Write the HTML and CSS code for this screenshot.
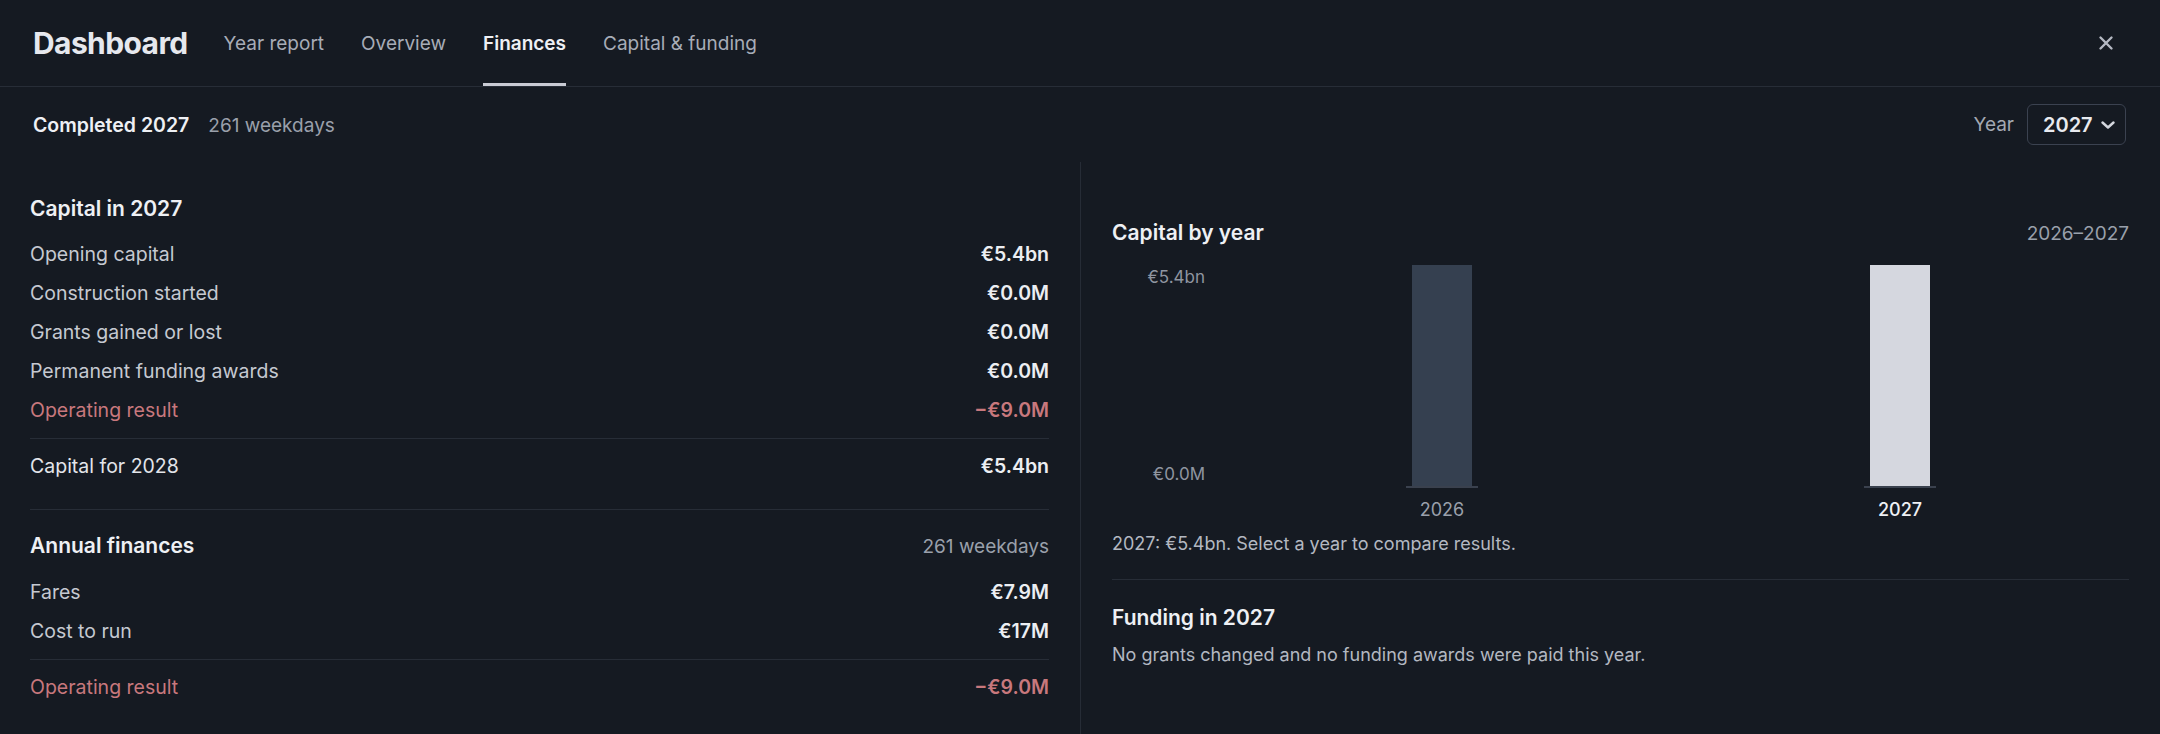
FILE: index.html
```html
<!DOCTYPE html>
<html>
<head>
    <title>Dashboard - Finances</title>
    <link rel="stylesheet" href="styles.css">
</head>
<body>
    <div class="header">
        <h1 class="title">Dashboard</h1>
        <nav class="tabs">
            <a class="tab">Year report</a>
            <a class="tab">Overview</a>
            <a class="tab active">Finances</a>
            <a class="tab">Capital &amp; funding</a>
        </nav>
        <button class="close" aria-label="Close">
            <svg width="16" height="16" viewBox="0 0 16 16"><path d="M2.5 2.5 L13.5 13.5 M13.5 2.5 L2.5 13.5" stroke="currentColor" stroke-width="2.4" stroke-linecap="round"/></svg>
        </button>
    </div>

    <div class="subheader">
        <div class="status">
            <span class="status-title">Completed 2027</span>
            <span class="muted">261 weekdays</span>
        </div>
        <div class="year-picker">
            <span class="year-label">Year</span>
            <button class="year-select">
                <span>2027</span>
                <svg width="14" height="8" viewBox="0 0 14 8"><path d="M1.5 1.5 L7 6.5 L12.5 1.5" fill="none" stroke="currentColor" stroke-width="2.4" stroke-linecap="round" stroke-linejoin="round"/></svg>
            </button>
        </div>
    </div>

    <div class="main">
        <div class="col col-left">
            <div class="section">
                <div class="section-head">
                    <h3>Capital in 2027</h3>
                </div>
                <div class="row"><span>Opening capital</span><b>€5.4bn</b></div>
                <div class="row"><span>Construction started</span><b>€0.0M</b></div>
                <div class="row"><span>Grants gained or lost</span><b>€0.0M</b></div>
                <div class="row"><span>Permanent funding awards</span><b>€0.0M</b></div>
                <div class="row negative"><span>Operating result</span><b>−€9.0M</b></div>
                <div class="row total"><span>Capital for 2028</span><b>€5.4bn</b></div>
            </div>

            <div class="section section-next">
                <div class="section-head">
                    <h3>Annual finances</h3>
                    <span class="muted">261 weekdays</span>
                </div>
                <div class="row"><span>Fares</span><b>€7.9M</b></div>
                <div class="row"><span>Cost to run</span><b>€17M</b></div>
                <div class="row total negative"><span>Operating result</span><b>−€9.0M</b></div>
            </div>
        </div>

        <div class="col col-right">
            <div class="section-head">
                <h3>Capital by year</h3>
                <span class="muted">2026–2027</span>
            </div>
            <div class="chart">
                <div class="axis">
                    <span>€5.4bn</span>
                    <span>€0.0M</span>
                </div>
                <div class="plot">
                    <div class="plot-col">
                        <div class="bar-area"><div class="bar" style="height: 100%"></div></div>
                        <div class="bar-label">2026</div>
                    </div>
                    <div class="plot-col selected">
                        <div class="bar-area"><div class="bar" style="height: 100%"></div></div>
                        <div class="bar-label">2027</div>
                    </div>
                </div>
            </div>
            <p class="caption">2027: €5.4bn. Select a year to compare results.</p>

            <div class="funding">
                <h3>Funding in 2027</h3>
                <p class="caption">No grants changed and no funding awards were paid this year.</p>
            </div>
        </div>
    </div>
</body>
</html>
```

FILE: styles.css
```css
body {
    margin: 0;
    background: #151a22;
    color: #e5e7ec;
    font-family: 'Inter', 'Noto Sans', sans-serif;
    overflow: hidden;
}
h1, h3, p {
    margin: 0;
}
button {
    font-family: inherit;
}
.header {
    display: flex;
    align-items: stretch;
    height: 86px;
    padding: 0 34px 0 33px;
    border-bottom: 1px solid #272d37;
}
.title {
    display: flex;
    align-items: center;
    font-size: 30px;
    font-weight: 700;
    letter-spacing: -0.02em;
    color: #e6e8ee;
    margin-right: 36px;
}
.tabs {
    display: flex;
    gap: 37px;
    flex: 1;
}
.tab {
    display: flex;
    align-items: center;
    font-size: 19px;
    color: #a7acb7;
    border-bottom: 3px solid transparent;
    padding-top: 3px;
    cursor: pointer;
}
.tab.active {
    color: #eef0f4;
    font-weight: 600;
    border-bottom-color: #c9cbd4;
}
.close {
    align-self: center;
    width: 40px;
    height: 40px;
    display: flex;
    align-items: center;
    justify-content: center;
    background: transparent;
    border: none;
    color: #b4b8c2;
    padding: 0;
    cursor: pointer;
}
.subheader {
    display: flex;
    align-items: center;
    justify-content: space-between;
    height: 75px;
    padding: 0 34px 0 33px;
}
.status {
    display: flex;
    align-items: baseline;
    gap: 19px;
}
.status-title {
    font-size: 19.5px;
    font-weight: 600;
    color: #eef0f4;
}
.muted {
    font-size: 19px;
    color: #9aa0ab;
}
.year-picker {
    display: flex;
    align-items: center;
    gap: 13px;
}
.year-label {
    font-size: 19px;
    color: #a3a8b2;
}
.year-select {
    display: flex;
    align-items: center;
    justify-content: space-between;
    width: 99px;
    height: 41px;
    padding: 0 10px 0 15px;
    box-sizing: border-box;
    background: #151a22;
    border: 1px solid #3b4250;
    border-radius: 6px;
    color: #e8eaef;
    font-size: 20px;
    font-weight: 600;
}
.year-select svg {
    color: #d4d7de;
}
.main {
    display: grid;
    grid-template-columns: 1fr 1fr;
}
.col-left {
    padding: 33px 31px 0 30px;
}
.col-right {
    border-left: 1px solid #262c36;
    padding: 57px 31px 0 31px;
    min-height: 515px;
}
.section-head {
    display: flex;
    align-items: baseline;
    justify-content: space-between;
    line-height: 28px;
}
.section-head h3,
.funding h3 {
    font-size: 21px;
    font-weight: 600;
    color: #eef0f4;
}
.section-head + .row {
    margin-top: 12px;
}
.row {
    display: flex;
    justify-content: space-between;
    line-height: 39px;
    font-size: 19.5px;
    color: #c5c9d1;
}
.row b {
    font-weight: 600;
    color: #eceef2;
}
.row.total {
    margin-top: 8px;
    padding-top: 8px;
    border-top: 1px solid #272d37;
    color: #e3e5ea;
}
.row.negative,
.row.negative b {
    color: #c8787d;
}
.section-next {
    margin-top: 23px;
    padding-top: 22px;
    border-top: 1px solid #272d37;
}
.chart {
    display: grid;
    grid-template-columns: 93px 1fr;
    gap: 8px;
    margin-top: 17px;
}
.axis {
    display: flex;
    flex-direction: column;
    justify-content: space-between;
    align-items: flex-end;
    height: 221px;
    font-size: 17px;
    line-height: 24px;
    color: #8f95a0;
}
.plot {
    display: grid;
    grid-template-columns: 1fr 1fr;
}
.plot-col {
    display: flex;
    flex-direction: column;
    align-items: center;
}
.bar-area {
    display: flex;
    align-items: flex-end;
    justify-content: center;
    width: 72px;
    height: 221px;
    border-bottom: 2px solid #3a414e;
}
.bar {
    width: 60px;
    background: #354050;
}
.selected .bar {
    background: #d5d7df;
}
.bar-label {
    margin-top: 10px;
    font-size: 18px;
    line-height: 24px;
    color: #9aa0ab;
}
.selected .bar-label {
    color: #eef0f4;
    font-weight: 500;
}
.caption {
    margin-top: 9px;
    font-size: 18px;
    line-height: 26px;
    color: #b3b8c1;
}
.funding {
    margin-top: 22px;
    padding-top: 24px;
    border-top: 1px solid #272d37;
}
.funding h3 {
    line-height: 28px;
}
.funding .caption {
    margin-top: 10px;
}
```
